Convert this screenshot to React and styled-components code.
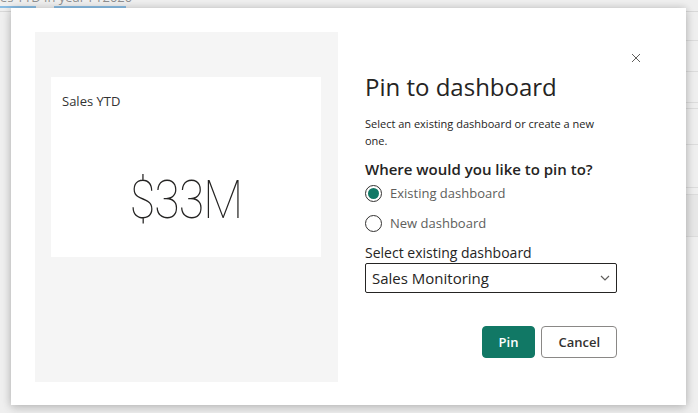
import React from "react";
import styled, { createGlobalStyle } from "styled-components";

const GlobalStyle = createGlobalStyle`
  html, body {
    margin: 0;
    padding: 0;
    background: #efefef;
    font-family: "Open Sans", "Noto Sans", sans-serif;
    overflow: hidden;
  }
`;

const Page = styled.div`
  width: 698px;
  height: 413px;
  position: relative;
  background: #f3f3f3;
  overflow: hidden;
`;

const TopBar = styled.div`
  height: 11px;
  position: relative;
  overflow: hidden;
  border-bottom: 1px solid #c8c8c8;
`;

const Breadcrumb = styled.div`
  height: 6px;
  overflow: hidden;
  font-size: 13px;
  line-height: 13px;
  color: #444;
  white-space: nowrap;
  span {
    display: block;
    margin-top: -9px;
  }
`;

const Underlines = styled.div`
  display: flex;
  gap: 18px;
`;

const Underline = styled.div`
  width: ${(p) => p.width}px;
  height: 2px;
  background: #3a96dd;
`;

const SideLines = styled.div`
  position: absolute;
  right: 0;
  top: 40px;
  width: 14px;
  display: flex;
  flex-direction: column;
`;

const SideRow = styled.div`
  height: ${(p) => p.h}px;
  border-top: 1px solid #cfcfcf;
  background: ${(p) => (p.dark ? "#e4e4e4" : "transparent")};
`;

const Overlay = styled.div`
  position: absolute;
  inset: 0;
  background: rgba(235, 235, 235, 0.45);
  padding: 8px 0 0 11px;
`;

const Modal = styled.div`
  position: relative;
  width: 675px;
  height: 397px;
  box-sizing: border-box;
  background: #fff;
  box-shadow: 0 0 8px rgba(0, 0, 0, 0.18), 0 4px 10px rgba(0, 0, 0, 0.12);
  display: flex;
  padding: 24px 0 23px 24px;
  gap: 27px;
`;

const Preview = styled.div`
  width: 303px;
  background: #f5f5f5;
  padding: 45px 17px 0 16px;
  box-sizing: border-box;
`;

const Tile = styled.div`
  height: 180px;
  background: #fff;
  display: flex;
  flex-direction: column;
  padding: 15px 11px;
  box-sizing: border-box;
`;

const TileTitle = styled.div`
  font-size: 13px;
  color: #333;
  font-family: "Open Sans", sans-serif;
`;

const TileValue = styled.div`
  flex: 1;
  display: flex;
  align-items: center;
  justify-content: center;
  font-family: "Roboto", sans-serif;
  font-weight: 100;
  font-size: 54px;
  color: #252423;
  padding-top: 46px;
  letter-spacing: -1px;
  transform: scaleX(0.86);
`;

const Form = styled.div`
  width: 252px;
  display: flex;
  flex-direction: column;
  padding-top: 40px;
`;

const Close = styled.button`
  position: absolute;
  top: 42px;
  right: 42px;
  width: 16px;
  height: 16px;
  padding: 0;
  border: none;
  background: none;
  display: flex;
  align-items: center;
  justify-content: center;
`;

const Title = styled.h1`
  margin: 0;
  font-size: 24px;
  font-weight: 400;
  color: #252423;
  line-height: 30px;
`;

const Desc = styled.p`
  margin: 13px 0 0;
  font-size: 11px;
  line-height: 17px;
  color: #252423;
  width: 240px;
`;

const Question = styled.div`
  margin-top: 10px;
  font-size: 15px;
  font-weight: 600;
  color: #252423;
  line-height: 20px;
`;

const RadioRow = styled.label`
  display: flex;
  align-items: center;
  gap: 8px;
  height: 18px;
  margin-top: ${(p) => p.mt}px;
  font-size: 13px;
  color: #605e5c;
`;

const RadioCircle = styled.span`
  width: 17px;
  height: 17px;
  box-sizing: border-box;
  border-radius: 50%;
  border: 1px solid #323130;
  display: flex;
  align-items: center;
  justify-content: center;
  &::after {
    content: "";
    width: 11px;
    height: 11px;
    border-radius: 50%;
    background: ${(p) => (p.checked ? "#117865" : "transparent")};
  }
`;

const FieldLabel = styled.div`
  margin-top: 11px;
  font-size: 14px;
  color: #252423;
  line-height: 20px;
`;

const Select = styled.div`
  height: 30px;
  box-sizing: border-box;
  border: 1px solid #252423;
  border-radius: 2px;
  display: flex;
  align-items: center;
  justify-content: space-between;
  padding: 0 6px 0 6px;
  font-size: 15px;
  color: #252423;
`;

const Actions = styled.div`
  margin-top: 33px;
  display: flex;
  justify-content: flex-end;
  gap: 6px;
`;

const Button = styled.button`
  height: 32px;
  padding: 0 16px;
  border-radius: 4px;
  font-family: "Open Sans", sans-serif;
  font-size: 13px;
  font-weight: 600;
  border: 1px solid ${(p) => (p.primary ? "#117865" : "#8a8886")};
  background: ${(p) => (p.primary ? "#117865" : "#fff")};
  color: ${(p) => (p.primary ? "#fff" : "#323130")};
`;

export default function App() {
  return (
    <Page>
      <GlobalStyle />
      <TopBar>
        <Breadcrumb>
          <span>es YTD in year FY2020</span>
        </Breadcrumb>
        <Underlines>
          <Underline width={36} />
          <Underline width={72} />
        </Underlines>
      </TopBar>
      <SideLines>
        <SideRow h={30} />
        <SideRow h={30} />
        <SideRow h={5} />
        <SideRow h={35} />
        <SideRow h={42} />
        <SideRow h={6} />
        <SideRow h={41} dark />
        <SideRow h={40} />
      </SideLines>
      <Overlay>
        <Modal>
          <Preview>
            <Tile>
              <TileTitle>Sales YTD</TileTitle>
              <TileValue>$33M</TileValue>
            </Tile>
          </Preview>
          <Form>
            <Title>Pin to dashboard</Title>
            <Desc>Select an existing dashboard or create a new one.</Desc>
            <Question>Where would you like to pin to?</Question>
            <RadioRow mt={5}>
              <RadioCircle checked />
              Existing dashboard
            </RadioRow>
            <RadioRow mt={12}>
              <RadioCircle />
              New dashboard
            </RadioRow>
            <FieldLabel>Select existing dashboard</FieldLabel>
            <Select>
              <span>Sales Monitoring</span>
              <svg width="10" height="6" viewBox="0 0 10 6">
                <path d="M1 1l4 4 4-4" fill="none" stroke="#605e5c" strokeWidth="1.2" />
              </svg>
            </Select>
            <Actions>
              <Button primary>Pin</Button>
              <Button>Cancel</Button>
            </Actions>
          </Form>
          <Close aria-label="Close">
            <svg width="10" height="10" viewBox="0 0 10 10">
              <path d="M1 1l8 8M9 1l-8 8" stroke="#605e5c" strokeWidth="1" />
            </svg>
          </Close>
        </Modal>
      </Overlay>
    </Page>
  );
}
